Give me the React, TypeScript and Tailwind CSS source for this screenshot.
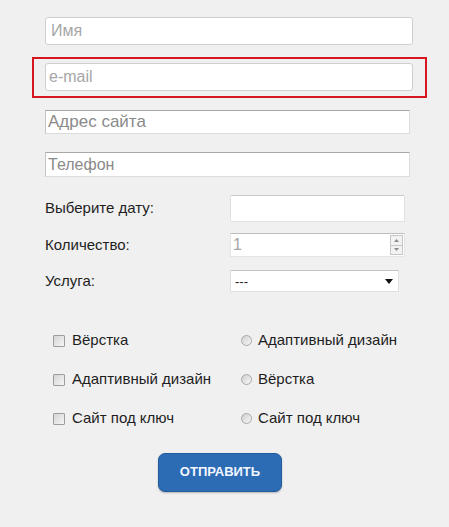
import React from 'react';

const font = { fontFamily: '"Liberation Sans", Arial, sans-serif' };

function Checkbox() {
  return (
    <span className="inline-block w-[12px] h-[12px] border border-[#9d9d9d] bg-gradient-to-br from-[#d4d4d4] to-[#f6f6f6] rounded-[1px] shrink-0" />
  );
}

function Radio() {
  return (
    <span className="inline-block w-[11px] h-[11px] rounded-full border border-[#a8a8a8] bg-gradient-to-br from-[#cfcfcf] to-[#f8f8f8] shrink-0" />
  );
}

const options = [
  ['Вёрстка', 'Адаптивный дизайн'],
  ['Адаптивный дизайн', 'Вёрстка'],
  ['Сайт под ключ', 'Сайт под ключ'],
];

export default function App() {
  return (
    <div className="w-[449px] h-[527px] bg-[#f0f0f0] text-[#1e1e1e] overflow-hidden" style={font}>
      <div className="pt-[17px]">
        {/* name */}
        <div className="ml-[45px] w-[368px] h-[28px] bg-white border border-[#cfcfcf] rounded-[3px] flex items-center px-[5px] text-[16px] text-[#a6a6a6]">
          Имя
        </div>

        {/* email, highlighted */}
        <div className="mt-[12px] ml-[32px] w-[395px] border-2 border-[#d8161d] pl-[11px] pt-[4px] pb-[5px]">
          <div className="w-[368px] h-[28px] bg-white border border-[#cfcfcf] rounded-[3px] flex items-center px-[3px] text-[16px] text-[#a6a6a6]">
            e-mail
          </div>
        </div>

        {/* site */}
        <div className="mt-[12px] ml-[45px] w-[365px] h-[24px] bg-white border border-[#dcdcdc] border-t-[#a8a8a8] border-l-[#c4c4c4] flex items-center px-[2px] text-[17px] text-[#8a8a8a]">
          Адрес сайта
        </div>

        {/* phone */}
        <div className="mt-[18px] ml-[45px] w-[365px] h-[25px] bg-white border border-[#dcdcdc] border-t-[#a8a8a8] border-l-[#c4c4c4] flex items-center px-[2px] text-[16px] text-[#8a8a8a]">
          Телефон
        </div>

        {/* date */}
        <div className="mt-[18px] flex items-center">
          <span className="ml-[45px] w-[185px] text-[15px]">Выберите дату:</span>
          <div className="w-[175px] h-[27px] bg-white border border-[#e0e0e0] border-t-[#c8c8c8] rounded-[2px]" />
        </div>

        {/* quantity */}
        <div className="mt-[11px] flex items-center">
          <span className="ml-[45px] w-[185px] text-[15px]">Количество:</span>
          <div className="w-[175px] h-[24px] bg-white border border-[#e4e4e4] border-t-[#bdbdbd] flex items-center justify-between pl-[2px] pr-[1px]">
            <span className="text-[16px] text-[#a6a6a6]">1</span>
            <div className="w-[13px] h-[20px] border border-[#c6c6c6] bg-[#f2f2f2] flex flex-col">
              <div className="flex-1 flex items-center justify-center border-b border-[#c6c6c6]">
                <svg width="5" height="3" viewBox="0 0 5 3"><path d="M0 3 L2.5 0 L5 3 Z" fill="#8a8a8a" /></svg>
              </div>
              <div className="flex-1 flex items-center justify-center">
                <svg width="5" height="3" viewBox="0 0 5 3"><path d="M0 0 L2.5 3 L5 0 Z" fill="#8a8a8a" /></svg>
              </div>
            </div>
          </div>
        </div>

        {/* service */}
        <div className="mt-[13px] flex items-center">
          <span className="ml-[45px] w-[185px] text-[15px]">Услуга:</span>
          <div className="w-[169px] h-[22px] bg-white border border-[#e0e0e0] border-t-[#c4c4c4] flex items-center justify-between pl-[4px] pr-[5px]">
            <span className="text-[13px] leading-none">---</span>
            <svg width="8" height="5" viewBox="0 0 8 5"><path d="M0 0 L8 0 L4 5 Z" fill="#111" /></svg>
          </div>
        </div>

        {/* checkboxes and radios */}
        <div className="mt-[38px] flex flex-col gap-[19px]">
          {options.map(([a, b], i) => (
            <div key={i} className="flex items-center h-[20px] text-[15px]">
              <div className="ml-[53px] w-[188px] flex items-center gap-[7px]">
                <Checkbox />
                <span>{a}</span>
              </div>
              <div className="flex items-center gap-[6px]">
                <Radio />
                <span>{b}</span>
              </div>
            </div>
          ))}
        </div>

        {/* submit */}
        <div className="mt-[24px] ml-[158px]">
          <button className="w-[124px] h-[39px] rounded-[7px] bg-[#2c6cb4] border border-[#245d9e] shadow-[0_1px_2px_rgba(0,0,0,0.25)] text-[#f2f6ff] text-[13px] font-bold uppercase">
            Отправить
          </button>
        </div>
      </div>
    </div>
  );
}
